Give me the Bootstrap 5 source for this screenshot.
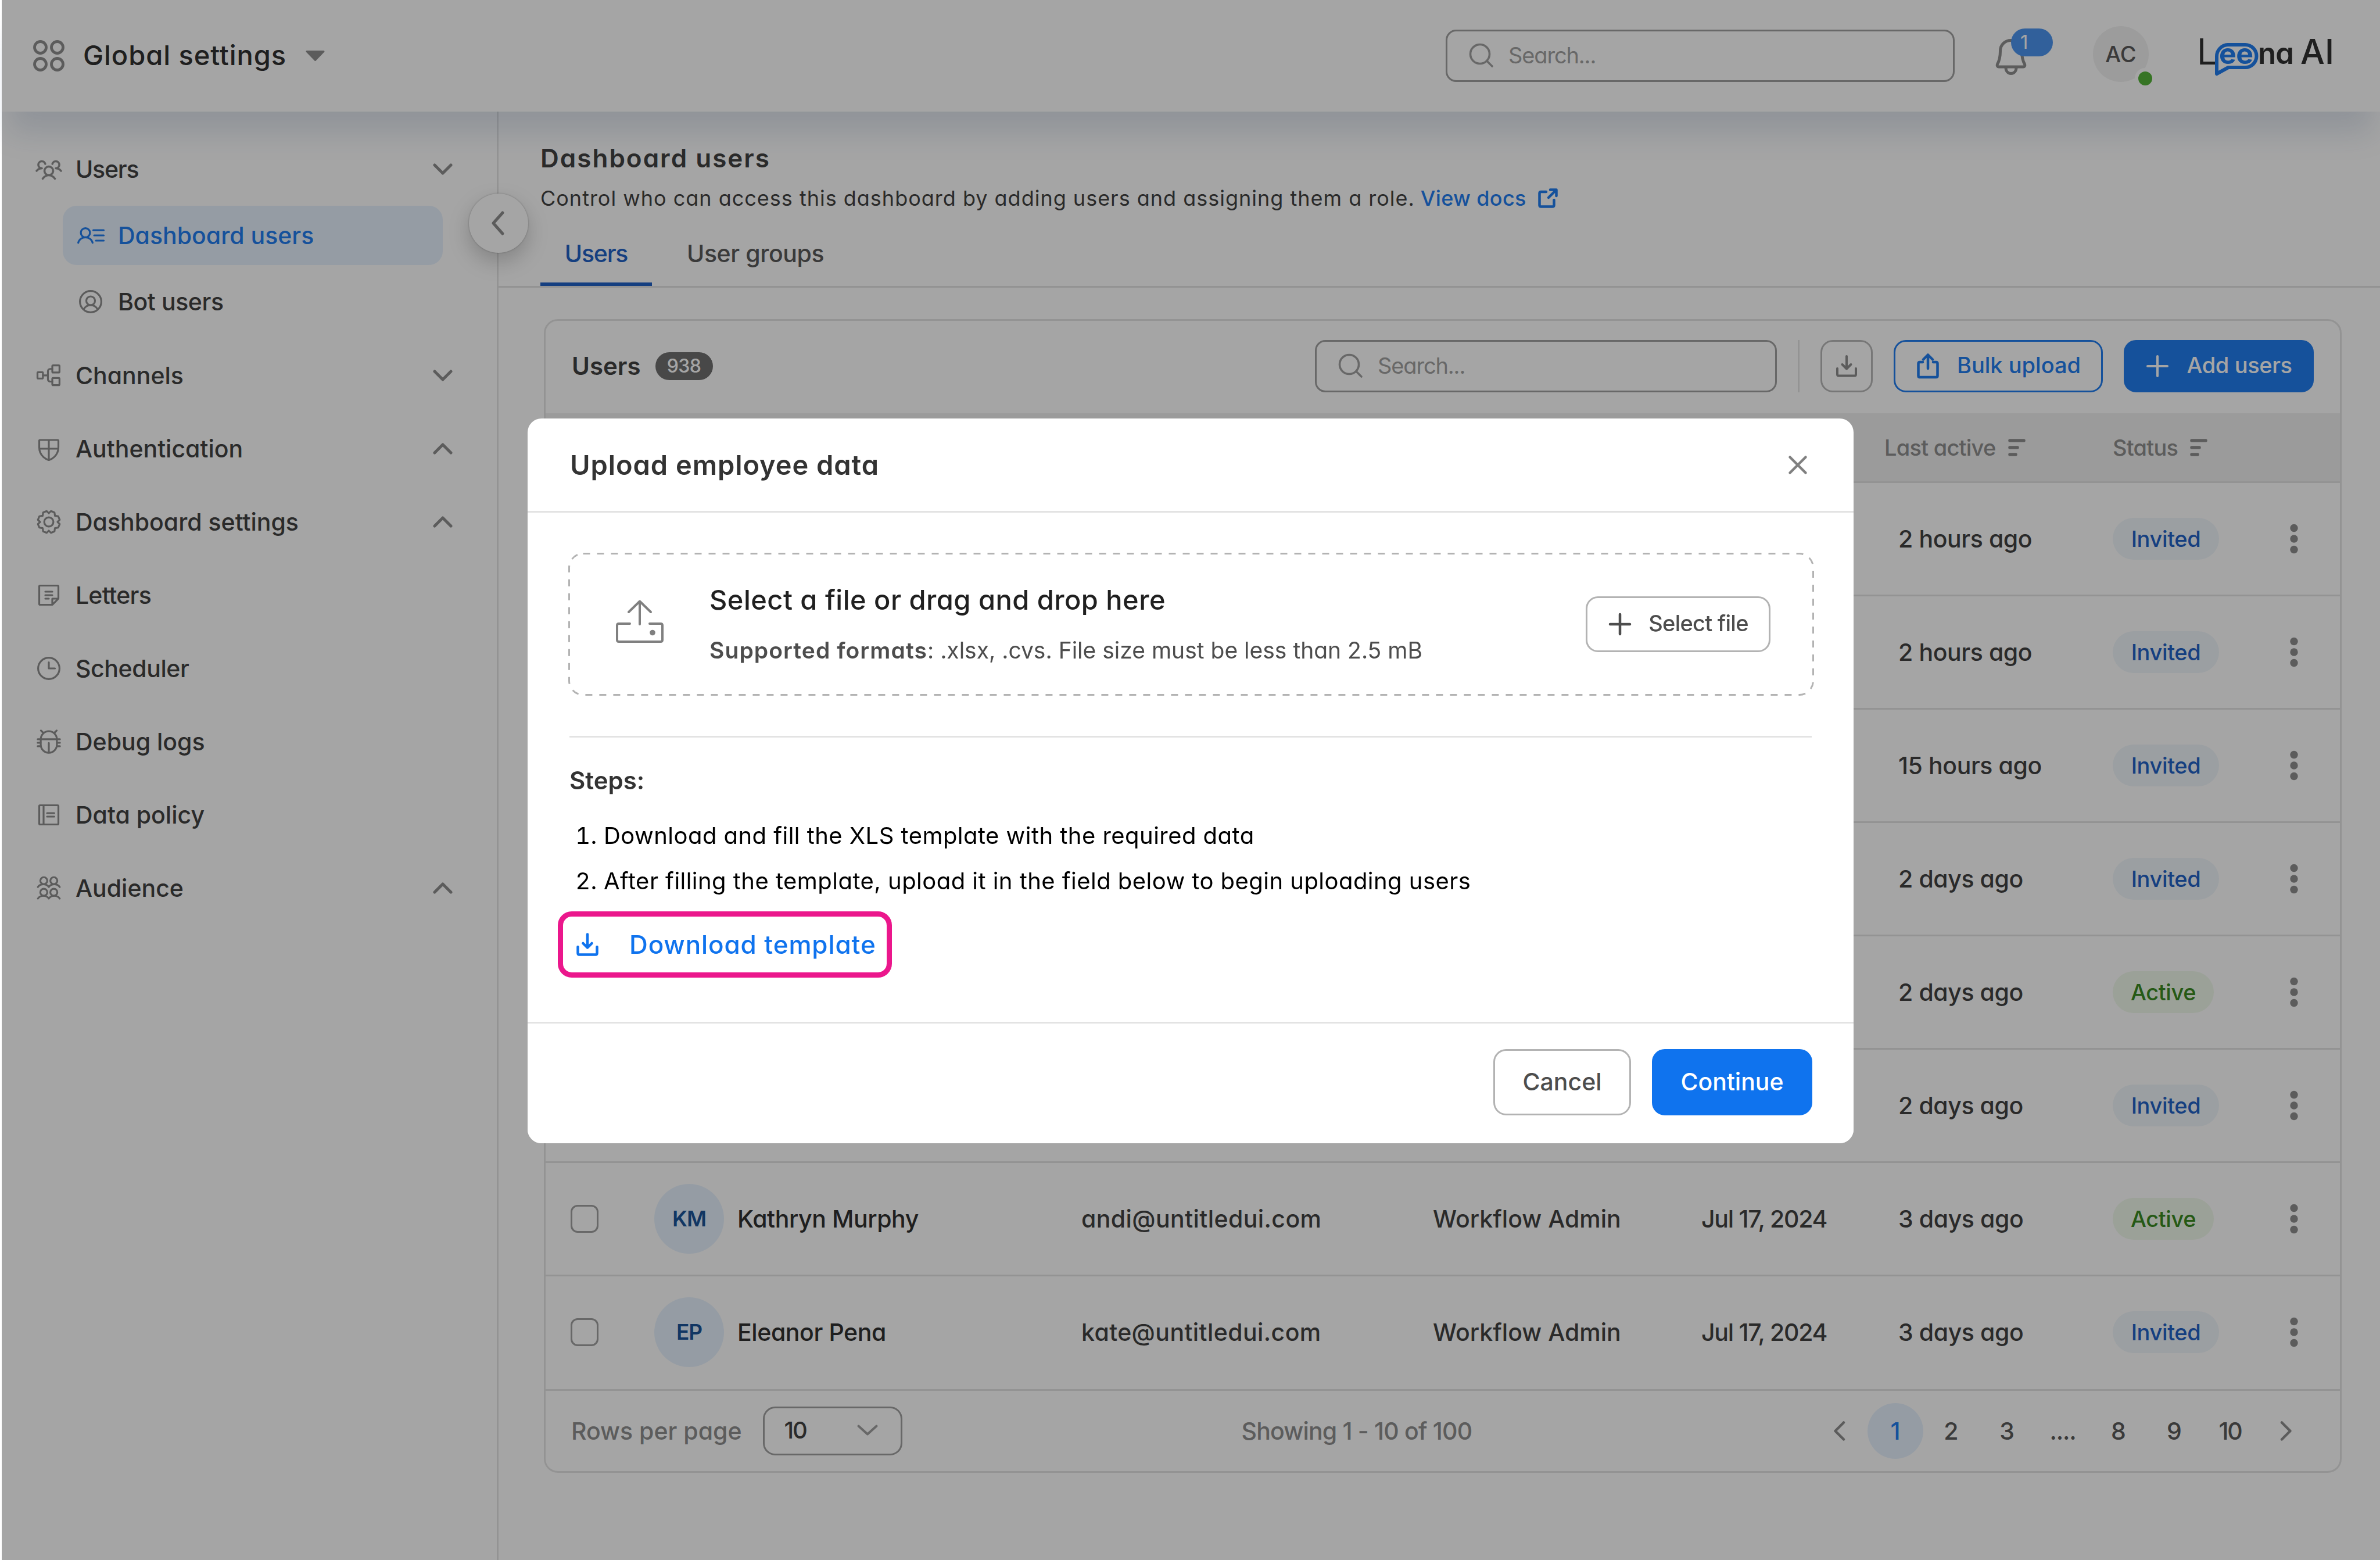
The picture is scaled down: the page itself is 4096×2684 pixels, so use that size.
<!DOCTYPE html>
<html lang="en">
<head>
<meta charset="utf-8">
<meta name="viewport" content="width=device-width, initial-scale=1">
<title>Dashboard users</title>
<link rel="stylesheet" href="https://cdn.jsdelivr.net/npm/bootstrap@5.3.0/dist/css/bootstrap.min.css">
<style>
:root{--blue:#0f73ee;--blue-dark:#1056c1;--blue-soft:#e5f1fe;--line:#e2e2e2;--ink:#333;--ink-strong:#202020;--ink-mid:#4d4d4d;--ink-soft:#858585;--field:#999}
html,body{height:100%;overflow:hidden}
body{font-family:Inter,"Open Sans",sans-serif;font-feature-settings:"cv11";font-size:41px;font-weight:500;line-height:60px;color:var(--ink);background:#fff}
svg{display:block;flex:none;fill:none;stroke:currentColor;stroke-linecap:round;stroke-linejoin:round;overflow:visible}
.n3{letter-spacing:-.03em}.n2{letter-spacing:-.02em}.n1{letter-spacing:-.01em}.n5{letter-spacing:-.055em}
.p1{letter-spacing:.01em}.p2{letter-spacing:.02em}.p3{letter-spacing:.0276em}.p5{letter-spacing:.0457em}
.f32{font-size:32px}.f36{font-size:36px}.f38{font-size:38px}.f47{font-size:47px}
.c-soft{color:var(--ink-soft)}.c-mid{color:var(--ink-mid)}.c-strong{color:var(--ink-strong)}.c-ink{color:var(--ink)}.c-blue{color:var(--blue)}
.ico{width:48px;height:48px;stroke-width:17}

.topbar{height:192px;padding:0 82px 0 57px;z-index:2;background:#fff}
.topbar::before{content:"";position:absolute;inset:0 0 0 3px;background:#fff;box-shadow:0 48px 48px -12px rgba(20,60,120,.15);z-index:-1}
.app-title{margin-left:32px;padding-bottom:2px}
.caret{margin-left:33px;width:33px;height:18px}
.finder{height:90px;border:3px solid var(--field);border-radius:18px;color:var(--field);padding:0 0 2px 37px;font-size:38px;font-weight:400;background:#fff}
.finder svg{width:42px;height:42px;stroke-width:3.6;margin-right:26px}
.finder-top{width:876px;padding-left:37px}
.bell{margin-left:70px;width:54px;height:62px;margin-top:4px}
.bell svg{width:54px;height:62px;stroke-width:5;color:var(--ink-soft)}
.bell-count{position:absolute;left:27px;top:-18px;width:72px;height:48px;border-radius:24px;background:#3f8dee;color:#fff;font-size:33px;line-height:47px;padding-left:16px;font-weight:400}
.me{margin-left:114px;width:96px;height:96px;background:#f0f0f0;margin-bottom:6px}
.me-dot{position:absolute;left:72px;top:72px;width:36px;height:36px;border:6px solid #fff;background:#47ae28}
.brand{margin:0 0 6px 86px;width:230px;height:90px}
.brand text{stroke:none;fill:#202020}
.brand .brand-blue{fill:var(--blue)}
.brand path{stroke:var(--blue)}

.side{width:855px;padding:36px 0 0 57px;border-right:3px solid var(--line);margin-left:3px}
.side-row{height:126px;padding-right:76px;gap:22px}
.side-row .chev{width:34px;height:20px;stroke-width:5;color:var(--ink-soft);margin-left:auto}
.side-row>.ico,.side-sub>.ico{color:var(--ink-soft)}
.side-sub{height:102px;width:654px;margin-left:48px;padding-left:24px;gap:23px;border-radius:24px;margin-bottom:12px}
.side-sub.on{background:var(--blue-soft);color:var(--blue)}
.side-sub.on>.ico{color:var(--blue)}
.side-sub:not(.on){margin-bottom:13px}
.fold{position:absolute;right:-54px;top:141px;width:102px;height:102px;background:#fff;color:var(--ink-soft);box-shadow:0 0 3px rgba(0,0,0,.3),0 15px 36px rgba(0,0,0,.22)}
.fold svg{width:22px;height:42px;stroke-width:5;margin-right:2px}

.page-head{padding:50px 0 0 72px;border-bottom:3px solid var(--line)}
.page-title{font-size:44px;font-weight:600;line-height:60px;margin:0;color:var(--ink)}
.page-sub{font-size:36px;line-height:54px;margin-top:12px;font-weight:400}
.page-sub svg{width:34px;height:34px;stroke-width:4.5;margin-left:20px}
.tab-strip{height:111px;margin-top:13px;gap:18px}
.tab-strip>div{height:111px;padding:0 42px 2px}
.tab-strip>.on{color:var(--blue-dark);border-bottom:6px solid var(--blue-dark);padding-top:6px;width:192px}

.panel{margin:54px 0 0 78px;width:3094px;border:3px solid var(--line);border-radius:24px}
.panel-head{height:159px;padding:0 45px 3px 45px;gap:36px}
.panel-head h2{font-size:42px;font-weight:600;margin:0}
.tally{width:99px;height:48px;border-radius:24px;background:#656565;color:#fff;margin-left:-11px}
.panel-head .finder{width:795px}
.rule-v{width:3px;height:90px;background:var(--line)}
.act{height:90px;border-radius:21px;border:3px solid #b3b3b3;font-size:38px;padding:0 0 1px;color:var(--ink-mid);font-weight:500}
.act span{padding-bottom:2px}
.act-get{width:90px;color:var(--ink-soft)}
.act-bulk{width:360px;border-color:var(--blue);color:var(--blue);gap:31px;padding-left:2px}
.act-add{width:327px;border-color:var(--blue);background:var(--blue);color:#fff;gap:31px;padding-left:2px}

.grid-t{table-layout:fixed;border-collapse:separate;border-spacing:0;margin:0;color:var(--ink)}
.grid-t>:not(caption)>*>*{padding:0;border-bottom:3px solid var(--line);vertical-align:middle;box-shadow:none;background:none}
.grid-t>thead>tr>th{height:120px;background:#efefef;font-size:38px;font-weight:500;color:var(--ink-soft)}
.grid-t tbody td{height:195px}
.grid-t>tbody>tr:last-child>td{height:197px;padding-bottom:3px}
.grid-t>tbody>tr>td.ago{padding-left:24px}
.grid-t th svg{width:30px;height:30px;stroke-width:5.5;margin-left:21px}
.tick{width:48px;height:48px;border:3px solid var(--field);border-radius:12px;margin-left:43px}
.face{width:120px;height:120px;background:var(--blue-soft);color:#094792;font-weight:600;margin:0 23px 0 -1px;font-size:37px}
.pill{display:inline-flex;align-items:center;justify-content:center;height:72px;border-radius:36px;font-size:38px}
.pill-inv{width:183px;background:#eff6fb;color:var(--blue-dark)}
.pill-act{width:174px;background:#eff9e9;color:#2b8110}
.dots{width:14px;height:52px;fill:var(--ink-soft);stroke:none;margin-left:44px}

.panel-foot{height:138px;padding:0 45px 0 44px}
.picker{width:240px;height:84px;border:3px solid var(--field);border-radius:21px;margin-left:36px;padding:0 39px 3px 34px;font-size:40px}
.picker svg{width:36px;height:19px;stroke-width:4;color:var(--field)}
.showing{margin-left:584px}
.pager>div{width:96px;height:96px}
.pager .on{background:var(--blue-soft);color:var(--blue)}
.pager svg{width:20px;height:34px;stroke-width:4.5}

.modal-backdrop.show{left:3px;background:#1f1f1f;opacity:.4}
.modal-dialog.sheet{width:2282px;max-width:none;margin:720px 0 0 908px}
.sheet .modal-content{border:0;border-radius:24px;height:1247px}
.sheet .modal-header{height:162px;border-bottom:3px solid #e3e3e3;padding:0 80px 0 73px}
.sheet .modal-header svg{width:32px;height:32px;stroke-width:4.5;color:#808080}
.sheet .modal-title{font-size:47px;font-weight:600;line-height:60px;color:var(--ink)}
.sheet .modal-body{padding:69px 70px 0;height:876px;flex:none}
.sheet .modal-footer{border-top:3px solid #e3e3e3;padding:0 71px 4px;gap:36px;flex:1;background:#fff;border-radius:0 0 24px 24px}
.sheet .modal-footer>*{margin:0}
.drop{width:2144px;height:246px;padding:0 75px 0 82px;margin-bottom:69px}
.drop-edge{position:absolute;inset:0;width:2144px;height:246px;stroke:#b3b3b3;stroke-width:3;stroke-linecap:butt;stroke-dasharray:12 12}
.drop-ico{width:82px;height:74px;stroke-width:4;color:#808080;margin-right:79px;margin-top:-11px}
.act-pick{width:318px;height:96px;gap:30px;background:#fff;padding-left:2px}
.drop-hint{font-size:39px;font-weight:400;line-height:54px;margin-top:30px;color:var(--ink-mid)}
.drop-hint b{font-weight:600}
.cut{height:3px;background:#e3e3e3;margin-right:2px;margin-left:2px}
.steps-t{font-size:42px;font-weight:600;margin:44px 0 0 2px}
.steps{font-size:40px;font-weight:400;color:#000;margin:26px 0 0;padding:0 0 0 61px;line-height:78px;letter-spacing:.0115em}
.fetch{width:575px;height:114px;border:9px solid #eb178c;border-radius:24px;margin:13px 0 0 -18px;padding-left:23px;font-size:44px;color:var(--blue);font-weight:500;gap:53px}
.fetch svg{width:38px;height:40px;stroke-width:4.5}
.end{height:114px;border-radius:22px;font-size:41px;font-weight:500;padding:0;border:3px solid #b3b3b3}
.end-no{width:237px;color:var(--ink-mid)}
.end-go{width:276px;background:var(--blue);border-color:var(--blue);color:#fff}
</style>
</head>
<body class="d-flex flex-column">

<header class="topbar position-relative d-flex align-items-center flex-shrink-0">
  <svg width="54" height="54" viewBox="0 0 54 54" stroke-width="4.8" class="c-soft"><circle cx="12.5" cy="12.5" r="10"/><circle cx="41.5" cy="12.5" r="10"/><circle cx="12.5" cy="41.5" r="10"/><circle cx="41.5" cy="41.5" r="10"/></svg>
  <div class="app-title f47 p2 c-strong">Global settings</div>
  <svg class="caret c-soft" viewBox="0 0 33 18"><path d="M2 1.5H31L16.5 16.5Z" fill="currentColor" stroke-width="3"/></svg>
  <div class="finder finder-top d-flex align-items-center ms-auto">
    <svg viewBox="0 0 42 42"><circle cx="19" cy="19" r="16.5"/><path d="M31 31L40 40"/></svg><span class="n3">Search...</span>
  </div>
  <div class="bell position-relative">
    <svg viewBox="0 0 54 62"><path d="M8.500 21C8.500 10 16.500 2.500 27 2.500S45.500 10 45.500 21C45.500 33 48 39 50.500 43.500C51.500 45.500 50.500 48 48 48H6C3.500 48 2.500 45.500 3.500 43.500C6 39 8.500 33 8.500 21Z"/><path d="M18 49C18 55 21.500 59.500 27 59.500S36 55 36 49"/></svg>
    <span class="bell-count">1</span>
  </div>
  <div class="me rounded-circle position-relative d-flex align-items-center justify-content-center f38 c-mid">AC<span class="me-dot rounded-circle"></span></div>
  <svg class="brand" viewBox="0 0 230 90">
    <text x="-3" y="63" font-size="62" font-weight="400" textLength="34" lengthAdjust="spacingAndGlyphs">L</text>
    <path d="M50 29H80A19.500 19.500 0 0 1 80 68H51L31 79V49A20 20 0 0 1 50 29Z" stroke-width="6"/>
    <text class="brand-blue" x="35" y="62" font-size="50" font-weight="700" textLength="59">ee</text>
    <text x="102" y="62" font-size="51" font-weight="600" textLength="62">na</text>
    <text x="175" y="62" font-size="59" font-weight="500" textLength="58">AI</text>
  </svg>
</header>

<div class="d-flex flex-grow-1">
  <aside class="side position-relative flex-shrink-0">
    <div class="side-row d-flex align-items-center">
      <svg class="ico" viewBox="0 0 256 256"><path fill="currentColor" stroke-width="3" d="M244.800,150.400a8,8,0,0,1-11.200-1.600A51.600,51.600,0,0,0,192,128a8,8,0,0,1-7.370-4.890,8,8,0,0,1,0-6.220A8,8,0,0,1,192,112a24,24,0,1,0-23.240-30,8,8,0,1,1-15.500-4A40,40,0,1,1,219,117.510a67.940,67.940,0,0,1,27.430,21.680A8,8,0,0,1,244.800,150.400ZM190.920,212a8,8,0,1,1-13.840,8,57,57,0,0,0-98.160,0,8,8,0,1,1-13.840-8,72.060,72.060,0,0,1,33.740-29.920,48,48,0,1,1,58.360,0A72.060,72.060,0,0,1,190.920,212ZM128,176a32,32,0,1,0-32-32A32,32,0,0,0,128,176ZM72,120a8,8,0,0,0-8-8A24,24,0,1,1,87.240,82a8,8,0,1,0,15.500-4A40,40,0,1,0,37,117.510,67.940,67.940,0,0,0,9.600,139.190a8,8,0,1,0,12.800,9.610A51.600,51.600,0,0,1,64,128,8,8,0,0,0,72,120Z"/></svg>
      <span class="n3">Users</span><svg class="chev" viewBox="0 0 34 20"><path d="M3 3L17 17L31 3"/></svg>
    </div>
    <div class="side-sub on d-flex align-items-center">
      <svg class="ico" viewBox="0 0 256 256"><circle cx="80" cy="104" r="42"/><path d="M14 196C22 164 50 146 80 146S138 164 146 196M152 80H248M160 128H248M176 176H248"/></svg>
      <span>Dashboard users</span>
    </div>
    <div class="side-sub d-flex align-items-center">
      <svg class="ico" viewBox="0 0 256 256"><circle cx="128" cy="128" r="98"/><circle cx="128" cy="120" r="40"/><path d="M63.800,199.370a72,72,0,0,1,128.400,0"/></svg>
      <span class="n1">Bot users</span>
    </div>
    <div class="side-row d-flex align-items-center">
      <svg class="ico" viewBox="0 0 256 256"><rect x="160" y="35" width="66" height="66" rx="8"/><rect x="160" y="151" width="66" height="66" rx="8"/><rect x="24" y="98" width="50" height="58" rx="8"/><path d="M74 127H120M160 184H140A20 20 0 0 1 120 164V88A20 20 0 0 1 140 68H160"/></svg>
      <span>Channels</span><svg class="chev" viewBox="0 0 34 20"><path d="M3 3L17 17L31 3"/></svg>
    </div>
    <div class="side-row d-flex align-items-center">
      <svg class="ico" viewBox="0 0 256 256"><path d="M40,114.790V56a8,8,0,0,1,8-8H208a8,8,0,0,1,8,8v58.770c0,84.180-71.310,112.070-85.540,116.800a7.540,7.540,0,0,1-4.920,0C111.310,226.860,40,199,40,114.790ZM128 48V230M41 128H215"/></svg>
      <span>Authentication</span><svg class="chev" viewBox="0 0 34 20"><path d="M3 17L17 3L31 17"/></svg>
    </div>
    <div class="side-row d-flex align-items-center">
      <svg class="ico" viewBox="0 0 256 256"><circle cx="128" cy="128" r="42"/><path d="M128 48L147.500 28L180 41.500L184.600 71.400L214.500 76L228 108.500L208 128L228 147.500L214.500 180L184.600 184.600L180 214.500L147.500 228L128 208L108.500 228L76 214.500L71.400 184.600L41.500 180L28 147.500L48 128L28 108.500L41.500 76L71.400 71.400L76 41.500L108.500 28Z"/></svg>
      <span>Dashboard settings</span><svg class="chev" viewBox="0 0 34 20"><path d="M3 17L17 3L31 17"/></svg>
    </div>
    <div class="side-row d-flex align-items-center">
      <svg class="ico" viewBox="0 0 256 256"><path d="M96 96H160M96 128H160M96 160H128M156.690,216H48a8,8,0,0,1-8-8V48a8,8,0,0,1,8-8H208a8,8,0,0,1,8,8V156.690a8,8,0,0,1-2.340,5.650l-51.320,51.320A8,8,0,0,1,156.690,216ZM215 160H160V215"/></svg>
      <span class="n2">Letters</span>
    </div>
    <div class="side-row d-flex align-items-center">
      <svg class="ico" viewBox="0 0 256 256"><circle cx="128" cy="128" r="98"/><path d="M128 72V128H184"/></svg>
      <span class="n1">Scheduler</span>
    </div>
    <div class="side-row d-flex align-items-center">
      <svg class="ico" viewBox="0 0 256 256"><rect x="54" y="32" width="148" height="198" rx="74"/><path d="M26 106H230M26 138H52M26 170H54M204 138H230M202 170H230M128 140V228M56 26L78 48M200 26L178 48"/></svg>
      <span>Debug logs</span>
    </div>
    <div class="side-row d-flex align-items-center">
      <svg class="ico" viewBox="0 0 256 256"><rect x="40" y="40" width="176" height="176" rx="8"/><path d="M80 40V216M112 112H178M112 144H178"/></svg>
      <span>Data policy</span>
    </div>
    <div class="side-row d-flex align-items-center">
      <svg class="ico" viewBox="0 0 256 256"><circle cx="82" cy="60" r="32"/><circle cx="174" cy="60" r="32"/><circle cx="82" cy="166" r="32"/><circle cx="174" cy="166" r="32"/><path d="M28 118C50 84 106 84 128 118C150 84 206 84 228 118M28 224C50 190 106 190 128 224C150 190 206 190 228 224"/></svg>
      <span>Audience</span><svg class="chev" viewBox="0 0 34 20"><path d="M3 17L17 3L31 17"/></svg>
    </div>
    <div class="fold rounded-circle d-flex align-items-center justify-content-center"><svg viewBox="0 0 22 42"><path d="M19 3L3 21L19 39"/></svg></div>
  </aside>

  <main class="flex-grow-1">
    <div class="page-head">
      <h1 class="page-title p5">Dashboard users</h1>
      <div class="page-sub d-flex align-items-center"><span class="p3">Control who can access this dashboard by adding users and assigning them a role.</span><span class="c-blue fw-medium p1">&nbsp;View docs</span>
        <svg class="c-blue" viewBox="0 0 34 34"><path d="M14 6H5C3.500 6 2.500 7 2.500 8.500V29C2.500 30.500 3.500 31.500 5 31.500H25C26.500 31.500 27.500 30.500 27.500 29V20M21 2.500H31.500V13M31 3L18 16"/></svg></div>
      <div class="tab-strip d-flex">
        <div class="on d-flex align-items-center justify-content-center n3">Users</div>
        <div class="d-flex align-items-center n1 c-mid">User groups</div>
      </div>
    </div>

    <section class="panel">
      <div class="panel-head d-flex align-items-center">
        <h2>Users</h2><span class="tally d-flex align-items-center justify-content-center f32 n2">938</span>
        <div class="finder d-flex align-items-center ms-auto"><svg viewBox="0 0 42 42"><circle cx="19" cy="19" r="16.500"/><path d="M31 31L40 40"/></svg><span class="n3">Search...</span></div>
        <div class="rule-v"></div>
        <button class="btn act act-get d-flex align-items-center justify-content-center" type="button" aria-label="Download"><svg width="38" height="38" viewBox="0 0 38 38" stroke-width="4"><path d="M3 23V33C3 34.500 4 35.500 5.500 35.500H32.500C34 35.500 35 34.500 35 33V23M19 2V23M11.500 16L19 23.500L26.500 16"/></svg></button>
        <button class="btn act act-bulk d-flex align-items-center justify-content-center" type="button"><svg width="38" height="44" viewBox="0 0 38 44" stroke-width="4.500"><path d="M10 15H5C3.500 15 2.500 16 2.500 17.500V38.500C2.500 40 3.500 41 5 41H33C34.500 41 35.500 40 35.500 38.500V17.500C35.500 16 34.500 15 33 15H28M19 26V3M11 10.500L19 2.500L27 10.500"/></svg><span>Bulk upload</span></button>
        <button class="btn act act-add d-flex align-items-center justify-content-center" type="button"><svg width="38" height="38" viewBox="0 0 38 38" stroke-width="4"><path d="M19 2V36M2 19H36"/></svg><span class="n1">Add users</span></button>
      </div>

      <table class="table grid-t">
        <colgroup><col width="188"><col width="734"><col width="605"><col width="462"><col width="315"><col width="393"><col width="261"><col></colgroup>
        <thead><tr><th></th><th></th><th></th><th></th><th></th>
          <th><div class="d-flex align-items-center n2">Last active<svg viewBox="0 0 30 30"><path d="M3 3H27M3 15H16M3 27H13"/></svg></div></th>
          <th><div class="d-flex align-items-center n2">Status<svg viewBox="0 0 30 30"><path d="M3 3H27M3 15H16M3 27H13"/></svg></div></th><th></th></tr></thead>
        <tbody>
          <tr><td></td><td></td><td></td><td></td><td></td><td class="ago n1">2 hours ago</td><td><span class="pill pill-inv n1">Invited</span></td><td><svg class="dots" viewBox="0 0 14 52"><circle cx="7" cy="7.500" r="6.700"/><circle cx="7" cy="26" r="6.700"/><circle cx="7" cy="44.500" r="6.700"/></svg></td></tr>
          <tr><td></td><td></td><td></td><td></td><td></td><td class="ago n1">2 hours ago</td><td><span class="pill pill-inv n1">Invited</span></td><td><svg class="dots" viewBox="0 0 14 52"><circle cx="7" cy="7.500" r="6.700"/><circle cx="7" cy="26" r="6.700"/><circle cx="7" cy="44.500" r="6.700"/></svg></td></tr>
          <tr><td></td><td></td><td></td><td></td><td></td><td class="ago n1">15 hours ago</td><td><span class="pill pill-inv n1">Invited</span></td><td><svg class="dots" viewBox="0 0 14 52"><circle cx="7" cy="7.500" r="6.700"/><circle cx="7" cy="26" r="6.700"/><circle cx="7" cy="44.500" r="6.700"/></svg></td></tr>
          <tr><td></td><td></td><td></td><td></td><td></td><td class="ago n1">2 days ago</td><td><span class="pill pill-inv n1">Invited</span></td><td><svg class="dots" viewBox="0 0 14 52"><circle cx="7" cy="7.500" r="6.700"/><circle cx="7" cy="26" r="6.700"/><circle cx="7" cy="44.500" r="6.700"/></svg></td></tr>
          <tr><td></td><td></td><td></td><td></td><td></td><td class="ago n1">2 days ago</td><td><span class="pill pill-act n1">Active</span></td><td><svg class="dots" viewBox="0 0 14 52"><circle cx="7" cy="7.500" r="6.700"/><circle cx="7" cy="26" r="6.700"/><circle cx="7" cy="44.500" r="6.700"/></svg></td></tr>
          <tr><td></td><td></td><td></td><td></td><td></td><td class="ago n1">2 days ago</td><td><span class="pill pill-inv n1">Invited</span></td><td><svg class="dots" viewBox="0 0 14 52"><circle cx="7" cy="7.500" r="6.700"/><circle cx="7" cy="26" r="6.700"/><circle cx="7" cy="44.500" r="6.700"/></svg></td></tr>
          <tr><td><div class="tick"></div></td><td><div class="d-flex align-items-center c-strong"><span class="face rounded-circle d-flex align-items-center justify-content-center n3">KM</span><span class="n1">Kathryn Murphy</span></div></td><td class="p1">andi@untitledui.com</td><td>Workflow Admin</td><td class="n3">Jul 17, 2024</td><td class="ago n1">3 days ago</td><td><span class="pill pill-act n1">Active</span></td><td><svg class="dots" viewBox="0 0 14 52"><circle cx="7" cy="7.500" r="6.700"/><circle cx="7" cy="26" r="6.700"/><circle cx="7" cy="44.500" r="6.700"/></svg></td></tr>
          <tr><td><div class="tick"></div></td><td><div class="d-flex align-items-center c-strong"><span class="face rounded-circle d-flex align-items-center justify-content-center n3">EP</span><span class="n1">Eleanor Pena</span></div></td><td class="p1">kate@untitledui.com</td><td>Workflow Admin</td><td class="n3">Jul 17, 2024</td><td class="ago n1">3 days ago</td><td><span class="pill pill-inv n1">Invited</span></td><td><svg class="dots" viewBox="0 0 14 52"><circle cx="7" cy="7.500" r="6.700"/><circle cx="7" cy="26" r="6.700"/><circle cx="7" cy="44.500" r="6.700"/></svg></td></tr>
        </tbody>
      </table>

      <div class="panel-foot d-flex align-items-center c-soft">
        <span>Rows per page</span>
        <div class="picker d-flex align-items-center justify-content-between"><span class="n5 c-ink">10</span><svg viewBox="0 0 36 19"><path d="M2.500 2.500L18 16.500L33.500 2.500"/></svg></div>
        <span class="showing n2">Showing 1 - 10 of 100</span>
        <div class="pager d-flex ms-auto c-mid text-center">
          <div class="d-flex align-items-center justify-content-center c-soft"><svg viewBox="0 0 20 34"><path d="M17 2.500L2.500 17L17 31.500"/></svg></div>
          <div class="on rounded-circle d-flex align-items-center justify-content-center">1</div>
          <div class="d-flex align-items-center justify-content-center">2</div>
          <div class="d-flex align-items-center justify-content-center">3</div>
          <div class="d-flex align-items-center justify-content-center n3">....</div>
          <div class="d-flex align-items-center justify-content-center">8</div>
          <div class="d-flex align-items-center justify-content-center">9</div>
          <div class="d-flex align-items-center justify-content-center n5">10</div>
          <div class="d-flex align-items-center justify-content-center c-soft"><svg viewBox="0 0 20 34"><path d="M3 2.500L17.500 17L3 31.500"/></svg></div>
        </div>
      </div>
    </section>
  </main>
</div>

<div class="modal-backdrop show"></div>
<div class="modal show d-block" tabindex="-1" role="dialog">
  <div class="modal-dialog sheet">
    <div class="modal-content">
      <div class="modal-header d-flex align-items-center justify-content-between">
        <h2 class="modal-title p2">Upload employee data</h2>
        <svg viewBox="0 0 32 32"><path d="M2.500 2.500L29.500 29.500M29.500 2.500L2.500 29.500"/></svg>
      </div>
      <div class="modal-body">
        <div class="drop position-relative d-flex align-items-center">
          <svg class="drop-edge" viewBox="0 0 2144 246"><rect x="1.500" y="1.500" width="2141" height="243" rx="24"/></svg>
          <svg class="drop-ico" viewBox="0 0 82 74"><path d="M24 41H5C3 41 2 42 2 44V69C2 71 3 72 5 72H77C79 72 80 71 80 69V44C80 42 79 41 77 41H58M41 42V3M22 21L41 2.500L60 21"/><circle cx="63" cy="56.500" r="4.800" fill="currentColor" stroke="none"/></svg>
          <div>
            <div class="f47 p1 c-strong">Select a file or drag and drop here</div>
            <div class="drop-hint"><b class="p3">Supported formats</b>: .xlsx, .cvs. File size must be less than 2.5 mB</div>
          </div>
          <button class="btn act act-pick d-flex align-items-center justify-content-center ms-auto" type="button"><svg width="38" height="38" viewBox="0 0 38 38" stroke-width="4.500"><path d="M19 2V36M2 19H36"/></svg><span class="n2">Select file</span></button>
        </div>
        <div class="cut"></div>
        <div class="steps-t">Steps:</div>
        <ol class="steps"><li>Download and fill the XLS template with the required data</li><li>After filling the template, upload it in the field below to begin uploading users</li></ol>
        <div class="fetch d-flex align-items-center"><svg viewBox="0 0 38 40"><path d="M2.500 24V35C2.500 36.500 3.500 37.500 5 37.500H33C34.500 37.500 35.500 36.500 35.500 35V24M19 2.500V25M11.500 18L19 25.500L26.500 18"/></svg><span class="p2">Download template</span></div>
      </div>
      <div class="modal-footer d-flex align-items-center justify-content-end">
        <button class="btn end end-no" type="button">Cancel</button>
        <button class="btn end end-go" type="button">Continue</button>
      </div>
    </div>
  </div>
</div>
<script src="https://cdn.jsdelivr.net/npm/bootstrap@5.3.0/dist/js/bootstrap.bundle.min.js"></script>
</body>
</html>
